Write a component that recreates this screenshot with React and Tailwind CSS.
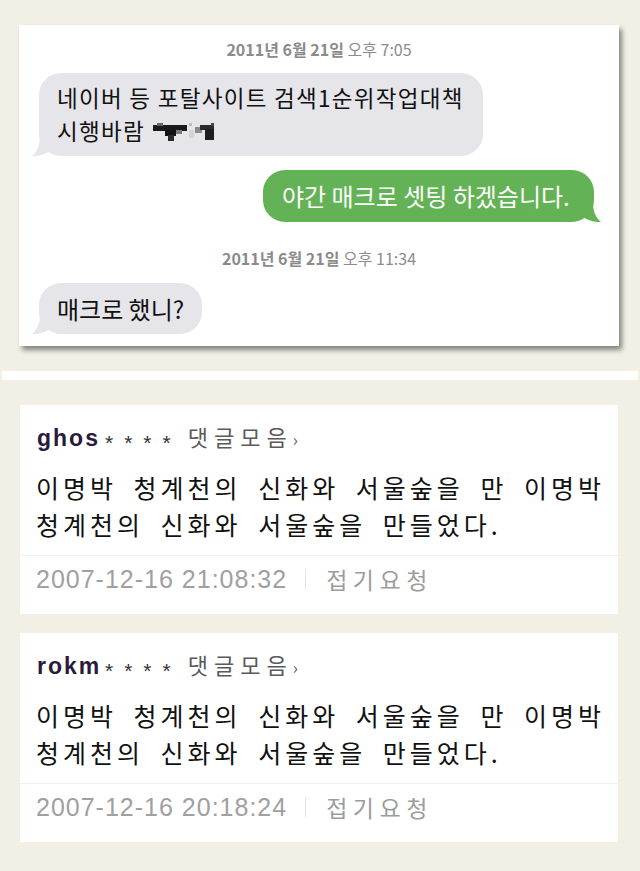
import React from 'react';

const KR = { fontFamily: '"Noto Sans CJK KR", "Noto Sans", sans-serif' };
const ARIAL = { fontFamily: '"Liberation Sans", Arial, sans-serif' };

// little curled tail under the chat bubbles
const Tail = ({ side, color }) => (
  <svg
    width="22"
    height="20"
    viewBox="0 0 22 20"
    className={`absolute bottom-0 ${side === 'left' ? '-left-[7px]' : '-right-[7px] -scale-x-100'}`}
  >
    <path d="M8 0 C8 10 5 16 0 20 C8 20 14 18 19 14 L22 14 L22 0 Z" fill={color} />
  </svg>
);

// pixelated (censored) emoji
const Pixelated = () => (
  <svg width="62" height="18" viewBox="0 0 62 18" className="inline-block ml-[8px] -mt-[4px] align-middle">
    <rect x="0" y="2" width="34" height="6" fill="#1a1a1a" />
    <rect x="4" y="0" width="6" height="3" fill="#666" />
    <rect x="12" y="7" width="11" height="6" fill="#111" />
    <rect x="15" y="12" width="6" height="6" fill="#2a2a2a" />
    <rect x="23" y="7" width="6" height="4" fill="#7a7a7a" />
    <rect x="36" y="0" width="3" height="3" fill="#bdbdbd" />
    <rect x="36" y="7" width="5" height="8" fill="#d4d4d6" />
    <rect x="42" y="4" width="7" height="6" fill="#8a8a8e" />
    <rect x="47" y="2" width="14" height="5" fill="#2a2a2a" />
    <rect x="52" y="6" width="9" height="11" fill="#1e1e1e" />
    <rect x="58" y="0" width="3" height="3" fill="#444" />
  </svg>
);

const Stamp = ({ date, time }) => (
  <div className="text-center text-[16px] leading-[20px] text-[#8b8b8b]" style={KR}>
    <span className="font-bold">{date}</span> {time}
  </div>
);

const Comment = ({ user, userWidth, date }) => (
  <div className="mx-[20px] w-[598px] h-[209px] bg-white flex flex-col">
    <div className="flex items-baseline pl-[17px] pt-[18px] h-[42px]">
      <span className={`font-bold text-[23px] leading-[24px] tracking-[2px] text-[#2a1b3d] ${userWidth}`} style={ARIAL}>
        {user}
      </span>
      <span className="text-[21px] tracking-[11px] text-[#333] translate-y-[4px]" style={ARIAL}>
        ****
      </span>
      <span className="ml-[6px] text-[22px] leading-[24px] tracking-[6px] text-[#5a5a5a]" style={KR}>
        댓글모음<span className="text-[17px]">›</span>
      </span>
    </div>
    <div
      className="mt-[22px] pl-[16px] text-[25px] leading-[37px] tracking-[4px] [word-spacing:7px] text-[#111] whitespace-nowrap"
      style={KR}
    >
      이명박 청계천의 신화와 서울숲을 만 이명박
      <br />
      청계천의 신화와 서울숲을 만들었다.
    </div>
    <div className="mt-[12px] h-px bg-[#efefea]" />
    <div className="flex items-center pl-[16px] pt-[10px] h-[36px]">
      <span className="text-[25px] leading-[26px] tracking-[1px] text-[#a0a0a0]" style={ARIAL}>
        {date}
      </span>
      <span className="ml-[18px] w-px h-[20px] bg-[#e2e2e2]" />
      <span className="ml-[20px] text-[23px] leading-[26px] tracking-[5.5px] text-[#9c9c9c]" style={KR}>
        접기요청
      </span>
    </div>
  </div>
);

export default function App() {
  return (
    <div className="min-h-[871px] w-[640px] bg-[#f2f0e5] pt-[25px] overflow-hidden">
      {/* message screenshot */}
      <div className="ml-[19px] w-[600px] h-[321px] bg-white shadow-[3px_4px_5px_rgba(0,0,0,0.45)] flex flex-col pt-[14px]">
        <Stamp date="2011년 6월 21일" time="오후 7:05" />

        <div
          className="relative mt-[14px] ml-[20px] w-[444px] h-[83px] rounded-[22px] bg-[#e5e5ea] pl-[18px] pt-[8px] text-[22.5px] leading-[33px] tracking-[1.3px] text-[#111]"
          style={KR}
        >
          네이버 등 포탈사이트 검색1순위작업대책
          <br />
          시행바람
          <Pixelated />
          <Tail side="left" color="#e5e5ea" />
        </div>

        <div
          className="relative mt-[14px] self-end mr-[25px] w-[331px] h-[52px] rounded-[22px] bg-[#63b356] pl-[19px] flex items-center text-[24px] text-white"
          style={KR}
        >
          야간 매크로 셋팅 하겠습니다.
          <Tail side="right" color="#63b356" />
        </div>

        <div className="mt-[26px]">
          <Stamp date="2011년 6월 21일" time="오후 11:34" />
        </div>

        <div
          className="relative mt-[15px] ml-[20px] w-[163px] h-[51px] rounded-[22px] bg-[#e5e5ea] pl-[18px] flex items-center text-[24px] text-[#111]"
          style={KR}
        >
          매크로 했니?
          <Tail side="left" color="#e5e5ea" />
        </div>
      </div>

      <div className="mt-[25px] mx-[2px] h-[9px] bg-white" />

      <div className="mt-[25px]">
        <Comment user="ghos" userWidth="w-[68px]" date="2007-12-16 21:08:32" />
      </div>
      <div className="mt-[19px]">
        <Comment user="rokm" userWidth="w-[68px]" date="2007-12-16 20:18:24" />
      </div>
    </div>
  );
}
